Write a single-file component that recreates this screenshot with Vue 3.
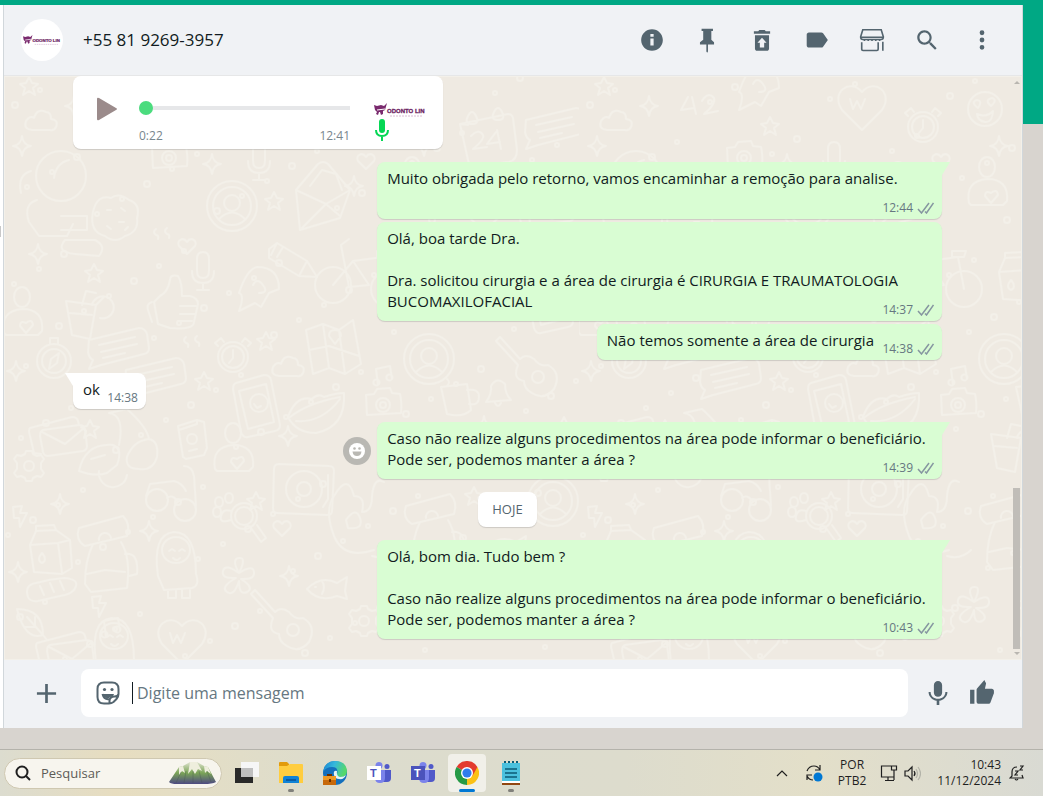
<script setup>
import { ref, reactive } from 'vue'

const draft = ref('')
const search = ref('')
const position = ref(0)

const contact = '+55 81 9269-3957'

const headerIcons = [
    { name: 'Dados do contato', d: 'M12 2C6.48 2 2 6.48 2 12s4.48 10 10 10 10-4.48 10-10S17.52 2 12 2zm1.5 15h-3v-6.5h3V17zm0-8h-3V6.500h3V9z' },
    { name: 'Fixar', d: 'M7 1.500h10.500v2.200h-1.500v8l2.500 2.300v2.200h-5.600v6.300l-.7 1.200-.8-1.200v-6.300H5.500V14L8.500 11.700v-8H7z' },
    { name: 'Restaurar', d: 'M19.500 4h-4l-1-1.300h-5L8.500 4h-4v2.200h15V4zM5.500 7.500v12.500c0 1.100.9 2 2 2h9c1.100 0 2-.9 2-2V7.500h-13zm8.500 7v4.500h-4v-4.500H7.800L12 10l4.200 4.500H14z' },
    { name: 'Etiqueta', d: 'M17.630 5.840C17.270 5.330 16.670 5 16 5L4.500 5.010C3.400 5.010 2.500 5.900 2.500 7v10c0 1.100.9 1.990 2 1.990L16 19c.67 0 1.270-.33 1.630-.84L22 12l-4.370-6.160z' },
    { name: 'Loja', line: true, d: 'M3.500 2.500h17l2 6.500c0 1.600-1 2.500-2.200 2.500H3.700C2.500 11.500 1.500 10.600 1.500 9zM2 9.500h20M2.500 14v6.500c0 .8.500 1.200 1.200 1.200H16.500c.8 0 1.200-.5 1.200-1.200V14M22 13.500v8.500M5 11v2M8.500 11v2M12 11v2M15.500 11v2M19 11v2' },
    { name: 'Pesquisar', d: 'M15.900 14.300H15l-.3-.3c1-1.100 1.600-2.700 1.600-4.300 0-3.700-3-6.700-6.700-6.700S3 6 3 9.700s3 6.700 6.700 6.700c1.600 0 3.200-.6 4.300-1.600l.3.3v.8l5.100 5.100 1.500-1.500-5-5.200zm-6.200 0c-2.600 0-4.600-2.100-4.600-4.600s2.100-4.600 4.600-4.600 4.600 2.100 4.600 4.600-2 4.600-4.600 4.600z' },
    { name: 'Menu', d: 'M12 7.500a2.200 2.200 0 1 0 0-4.400 2.200 2.200 0 0 0 0 4.400zm0 2.300a2.200 2.200 0 1 0 0 4.400 2.200 2.200 0 0 0 0-4.400zm0 6.700a2.200 2.200 0 1 0 0 4.400 2.200 2.200 0 0 0 0-4.400z' }
]

const messages = reactive([
    { out: true, tail: true, gap: true, time: '12:44', text: 'Muito obrigada pelo retorno, vamos encaminhar a remoção para analise.' },
    { out: true, time: '14:37', text: 'Olá, boa tarde Dra.\n\nDra. solicitou cirurgia e a área de cirurgia é CIRURGIA E TRAUMATOLOGIA BUCOMAXILOFACIAL' },
    { out: true, time: '14:38', text: 'Não temos somente a área de cirurgia' },
    { tail: true, gap: true, time: '14:38', text: 'ok' },
    { out: true, tail: true, gap: true, react: true, time: '14:39', text: 'Caso não realize alguns procedimentos na área pode informar o beneficiário. Pode ser, podemos manter a área ?' },
    { day: 'HOJE' },
    { out: true, tail: true, gap: true, time: '10:43', text: 'Olá, bom dia. Tudo bem ?\n\nCaso não realize alguns procedimentos na área pode informar o beneficiário. Pode ser, podemos manter a área ?' }
])

// wallpaper drawings, each one centred on 0,0
const shapes = {
    star: 'M0-9L3-3 9-2 4 2 6 9 0 5-6 9-4 2-9-2-3-3Z',
    sparkle: 'M0-10Q1-1 9 0 1 1 0 10-1 1-9 0-1-1 0-10Z',
    heart: 'M0 8L-8 0C-11-5-4-10 0-4 4-10 11-5 8 0Z',
    bigHeart: 'M0 26L-20 6C-32-12-12-26 0-12 12-26 32-12 20 6ZM-12-5l3 10 4-8 4 8 4-10',
    dot: 'M-3 0a3 3 0 1 0 6 0a3 3 0 1 0-6 0',
    mini: 'M-2 0a2 2 0 1 0 4 0a2 2 0 1 0-4 0',
    avatar: 'M-25 0a25 25 0 1 0 50 0a25 25 0 1 0-50 0M-19 0a19 19 0 1 0 38 0a19 19 0 1 0-38 0M-8-3a8 8 0 1 0 16 0a8 8 0 1 0-16 0M-13 13Q0 0 13 13',
    astro: 'M-25-20a25 25 0 1 0 50 0a25 25 0 1 0-50 0M-7-18q2-15 15-18M-30-25q-14 4-10 22M-24 4q-14 4-8 22l10 14h28l6-12M0 20h26v14H0M4 44q-10 12 10 14l24 2q8-10-4-16z',
    cookie: 'M-22-6q4-18 18-14 8-6 18 2 12 4 8 18 2 14-12 18-10 8-20 0-16-4-12-24zM-8-8h4M6-10l4 3M-8 8l4 3M4 4h5M10 12l3-3',
    compass: 'M-17 0a17 17 0 1 0 34 0a17 17 0 1 0-34 0M-12 0a12 12 0 1 0 24 0a12 12 0 1 0-24 0M5-8L-3-2-5 8 3 2ZM-4-17v-6h8v6',
    chat: 'M-28-6L22-18q6 0 8 6l2 14q0 5-5 6L-16 19l-12 4 4-9q-4-2-5-8zM-18-1L18-9M-16 6L20-2M-14 12L8 7',
    letter: 'M-27-8L15-19q5 0 6 4l1 4M-27-8q-2 2 0 8l4 17 7 1M-14-6l36-5q5 0 6 4l2 17q0 4-4 5L-9 20q-4 0-5-4l-3-16q0-5 3-6zM-15-4L8 8 27-8',
    openLetter: 'M-26-6L-4-32q5-4 10 0L28-6 18 22-22 34ZM-26-6L4 8 28-6M4 8L-20 32M4 8L18 20M-12-10L0-26 14-22 20-6',
    thumb: 'M-18-2l4 22 12 4q24 2 24-6l4-18q0-6-8-8l-8 0q0-14-4-20-8-2-8 4-2 12-10 16zM-20-2q-6 2-4 8l4 12M8 2h16M8 10h16M6 17h14',
    mic: 'M-6-12q0-7 6-7t6 7v12q0 7-6 7t-6-7zM-11 0q0 12 11 12T11 0M0 12v7M-6 19H6',
    pencil: 'M-22-14l8-6 30 18 10 16-18-1-30-18zM-14-20l-6 12M-8-16l-6 10M16-2L8 13',
    drink: 'M-18-12L12-8 6 26-12 22ZM-14 0L8 2M-2-8l4-14 10 2M8-8a11 11 0 1 1 8 13M12-8l8-8',
    clock: 'M-15 0a15 15 0 1 0 30 0a15 15 0 1 0-30 0M-11 0a11 11 0 1 0 22 0a11 11 0 1 0-22 0M0-7v8l-4 5M-15-11l-3-3 6-5 3 4M15-11l3-3-6-5-3 4',
    cloud: 'M-10 9q-9-1-6-9 4-6 8-3 3-10 12-6 5 0 5 7 8 1 5 8-2 4-6 3z',
    phone: 'M-20-22L8-30q6 0 7 5L24 20q0 5-5 6L-8 32q-5 1-7-5l-8-43q0-5 3-6zM-17-14L10-21l8 38-26 7ZM-6-2a9 9 0 1 0 18 0a9 9 0 1 0-18 0M-2-1l3 4 4-2',
    lips: 'M-28 4Q-20-18-4-14 2-20 8-16 20-20 28-20 30 14 0 20-20 20-28 4ZM-26 4Q-8-10 24-16M-20 8Q6 10 24-14',
    map: 'M-27-16L-10-22 6-16 20-26 28 18 12 28-4 22-20 28ZM-10-22l6 44M6-16l6 44M-24 4l20-4 30 10M2-2l6-8q0-6-6-6t-6 6z',
    scooter: 'M-38 20q6-28 34-26 10 4 4 20l-10 8q-12 4-28-2zM-18 20a14 14 0 0 0 28 4M2-6q6-30-10-32M-8-38l18-4q20 18 22 30 10 2 8 18-4 14-18 12-14 0-12-12 6-16 22-18M-26 8l14-4',
    gear: 'M-4-12L-3-15H3L4-12 8-10 12-11 15-7 12-3V3L15 7 12 11 8 10 4 12 3 15H-3L-4 12-8 10-12 11-15 7-12 3V-3L-15-7-12-11-8-10ZM-5 0a5 5 0 1 0 10 0a5 5 0 1 0-10 0',
    card: 'M-13-13L6-19l7 2 3 26-3 7-18 4-3-2zM6-19v4L-12-9M-4 0a5 5 0 1 0 10 0a5 5 0 1 0-10 0M-2 12l8-2',
    person: 'M-8-14a8 10 0 1 0 16 0a8 10 0 1 0-16 0M-18 22q-4-22 18-24 22 0 20 22l-4 4h-32zM4 22l-6-7q0-6 6-3 6-5 7 2z',
    deck: 'M-30-20q0-5 5-5l50 2q5 0 5 5l-2 40q0 4-5 4l-50-2q-4 0-4-5zM-18 0a18 18 0 1 0 36 0a18 18 0 1 0-36 0M-7 0a7 7 0 1 0 14 0a7 7 0 1 0-14 0M24-14v24l-5 8',
    glasses: 'M-26 4a11 11 0 1 0 22 0a11 11 0 1 0-22 0M2 14a11 11 0 1 0 22 0a11 11 0 1 0-22 0M-5 2q6-4 10 3M-26 0l4-12 24-3q8 2 12 10M24 10L22-20q-2-10-10-10',
    lens: 'M-6 0a13 13 0 1 0 26 0a13 13 0 1 0-26 0M-2 0a9 9 0 1 0 18 0a9 9 0 1 0-18 0M14 12l10 14 5-4-9-13M-22-14a4 5 0 1 0 8 0a4 5 0 1 0-8 0M-12-18a4 5 0 1 0 8 0a4 5 0 1 0-8 0M-24-4a4 5 0 1 0 8 0a4 5 0 1 0-8 0M-6 4q-12 4-10-4t10-5',
    milk: 'M-20-4l6-14 20-1 14 10 2 28-10 6-28-2ZM-20-4L8-6 20-9M8-6l4 30M-14-18v-5l18-1 2 5M-8 14q-6-3 0-10 6 7 0 10z',
    pack: 'M-28-30L16-42q8 8 4 20L-22-12q-10-6-6-18zM-14-14q-8 16-8 40l6 8 36-4q4-30-6-46M-20 16l18-4 20 2M-8-18a6 6 0 0 1 12-2M18-4q14-2 12 20l-8 2',
    penguin: 'M-18 16q-6-42 16-44 22 0 22 42 4 12-4 14l-28 2zM-14-10a14 13 0 1 0 28 0a14 13 0 1 0-28 0M-7-9l3-2 3 2M3-9l3-2 3 2M-3-2q4 4 7 0M-8 30v8h8v-8M6 30v8h8v-8',
    flower: 'M0-4q-8-14 0-15t0 15q14-9 15-1T2 2q14 9 6 13T0 4q-5 16-12 11T-3 1q-15 1-13-7T0-4z',
    fish: 'M-18 2Q-4-12 12-4l10-6-2 14 2 8-10-3Q-6 16-18 2ZM-10 0h1M-3-6q4 6 0 13',
    guitar: 'M-28-34l20 22q6-6 14 0 6 8 14 6 14 8 6 24-10 12-22 4-8-4-8-12-12-2-6-16l-22-24zM4 6a6 6 0 1 0 12 0a6 6 0 1 0-12 0',
    leaf: 'M-12-14q26 0 26 26-18 6-26-26zM14 12L-2-6M6 4V-6M6 4H-4M14 12l4 5',
    bread: 'M-26 8q-4-12 8-14 14-4 28-5 14 1 12 8-2 8-16 10l-22 5q-8 1-10-4zM-14-3l4 9M-4-6l4 9M6-8l4 9',
    calendar: 'M-28-14L20-24q4 0 5 4l4 32q0 10-8 12l-34 4q-6 0-7-6zM-28-14l8 1M-20-22q4-8 8 0t-4 8-4-8M6-26q4-8 8 0t-4 8-4-8M-17-2q8-8 12-1 2 4-10 14l14-2M8-6L-1 6l13-2M9-8l4 19',
    bike: 'M-34 14a18 18 0 1 0 36 0a18 18 0 1 0-36 0M22 18a18 18 0 1 0 36 0a18 18 0 1 0-36 0M-16 14L4-10l16 24-20 2L-8-26l8-6M4-10l30-4 6 32M28-20h14l-2 6H28z',
    mug: 'M-14-12l26-3 4 26q-8 8-24 4zM12-9q12-2 12 7t-10 7M-8-20q4 3 0 7',
    bell: 'M-12 8q6-8 5-16 6-10 14-2 0 10 6 16zM-3 9q3 6 6 0',
    camera: 'M-17-8l8-1 3-5 13-1 2 5 8 1q2 8 1 19l-34 2zM-7 2a7 7 0 1 0 14 0a7 7 0 1 0-14 0M-3 2a3 3 0 1 0 6 0a3 3 0 1 0-6 0',
    dino: 'M-30 20q-10-26 0-40 14-24 20 0 12 0 8 16 10 0 10-16 2-20 12-14M-30 20q10 24 40 14M-18 4q10-14 14-2t-12 10zM8 40q14 4 24-6',
    smile: 'M-17 0a17 17 0 1 0 34 0a17 17 0 1 0-34 0M-7-1q-8-6-1-8 6 1 1 8zM6-3q-7-6 1-8 6 2-1 8zM-8 5q10 4 16-3-1 12-8 11t-8-8z',
    number: 'M-12-8l-7 13 13-2M-8-8l4 17M2-4q6-10 12-3 2 6-10 16l14-3',
    bird: 'M-20 20q6-16 0-18 8-24 18-26 22 0 22 22l-10 4-8 14-6-4zM-6-6q4-8 10 0t-4 8',
    quote: 'M-8-5q-4 3 0 6 3 0 2 4M3-6q-4 3 0 6 3 0 2 4',
    note: 'M-5 8a3 3 0 1 0-1 1l-2-16L6-10l2 13a3 3 0 1 0-1 1',
    bolt: 'M-7-9L2-10 0-3H7L0 11-1 2H-6Z'
}

const doodles = [
    ['astro', 57, 120], ['cookie', 111, 142], ['compass', 50, 285], ['chat', 113, 270], ['chat', 150, 300], ['avatar', 228, 130],
    ['openLetter', 318, 120], ['thumb', 168, 228], ['mic', 199, 195], ['pencil', 287, 187], ['drink', 80, 237], ['clock', 229, 281],
    ['cloud', 285, 291], ['phone', 252, 329], ['lips', 312, 337], ['map', 329, 270], ['letter', 53, 360], ['scooter', 113, 375],
    ['gear', 25, 390], ['card', 187, 363], ['person', 229, 371], ['deck', 300, 413], ['glasses', 168, 420], ['lens', 233, 440],
    ['milk', 46, 473], ['pack', 103, 482], ['penguin', 172, 484], ['flower', 235, 501], ['fish', 321, 511], ['guitar', 279, 548],
    ['leaf', 25, 547], ['bread', 50, 513], ['bigHeart', 178, 562], ['calendar', 484, 62], ['chat', 550, 50], ['bike', 345, 195],
    ['avatar', 425, 283], ['guitar', 524, 295], ['mug', 451, 323], ['bell', 494, 318], ['camera', 379, 327], ['dino', 360, 440],
    ['avatar', 549, 425], ['bigHeart', 283, 28], ['smile', 406, 33], ['clock', 344, 51], ['number', 121, 29], ['star', 191, 50],
    ['bird', 180, 14], ['cloud', 38, 45], ['person', 408, 105], ['camera', 165, 80], ['bigHeart', 480, 130], ['letter', 540, 130],
    ['milk', 440, 200], ['smile', 500, 220], ['phone', 545, 225], ['drink', 430, 370], ['cookie', 500, 380], ['pack', 430, 460],
    ['fish', 500, 470], ['flower', 395, 530], ['mug', 450, 545], ['gear', 360, 545], ['lips', 520, 540], ['note', 380, 300],
    ['person', 18, 235], ['mic', 255, 85], ['bird', 255, 215], ['letter', 60, 575], ['penguin', 110, 570], ['quote', 160, 158],
    ['quote', 190, 266], ['note', 108, 552], ['bolt', 95, 530], ['bolt', 16, 440], ['star', 86, 353], ['star', 200, 305],
    ['star', 262, 265], ['star', 252, 425], ['star', 25, 10], ['star', 270, 125], ['star', 90, 197], ['sparkle', 18, 70],
    ['sparkle', 34, 178], ['sparkle', 145, 455], ['sparkle', 56, 428], ['sparkle', 12, 295], ['sparkle', 208, 88], ['sparkle', 284, 360],
    ['sparkle', 350, 110], ['sparkle', 14, 496], ['sparkle', 285, 500], ['sparkle', 420, 70], ['sparkle', 70, 30], ['heart', 183, 170],
    ['heart', 278, 452], ['heart', 362, 85], ['sparkle', 480, 350], ['star', 560, 350], ['star', 470, 420], ['sparkle', 560, 500]
]

// loose circles between the drawings
for (let i = 0; i < 150; i++) {
    doodles.push([i % 3 ? 'mini' : 'dot', (i * 139 + 11) % 575, (i * 233 + 29) % 584])
}

const apps = ['Visão de tarefas', 'Explorador de Arquivos', 'Edge', 'Teams', 'Teams pessoal', 'Chrome', 'Bloco de notas']
</script>

<template>
    <div class="desktop">
        <main class="stage">
            <div class="sidebar_edge"><span></span></div>
            <section class="window">
                <header class="chat_header">
                    <div class="avatar">
                        <svg class="logo" viewBox="0 0 52 16">
                            <g id="brand">
                                <path fill="#7a2a6e" d="M0 3l3 1 4-1 3 1 3-3-2 7-2 1v3l-2 1-1-3H5l-1 3-2-1 1-2-2-2z" />
                                <path stroke="#fff" fill="none" d="M3 8l8-1" />
                                <text x="13" y="11" font-family="Liberation Sans, sans-serif" font-size="6" font-weight="700" fill="#6d2462" stroke="#6d2462" stroke-width=".3">ODONTO LIN</text>
                                <path stroke="#d9bcd4" stroke-width="1" stroke-dasharray="2 1" d="M16 14h32" />
                            </g>
                        </svg>
                    </div>
                    <h1>{{ contact }}</h1>
                    <nav class="header_actions">
                        <button v-for="icon in headerIcons" :key="icon.name" :aria-label="icon.name">
                            <svg viewBox="0 0 24 24" :class="{ line: icon.line }"><path :d="icon.d" /></svg>
                        </button>
                    </nav>
                </header>

                <div class="conversation">
                    <svg class="wallpaper" aria-hidden="true">
                        <defs>
                            <pattern id="doodles" width="575" height="584" patternUnits="userSpaceOnUse">
                                <path v-for="(item, index) in doodles" :key="index" :d="shapes[item[0]]" :transform="`translate(${item[1]} ${item[2]})`" />
                            </pattern>
                        </defs>
                        <rect width="100%" height="100%" fill="url(#doodles)" />
                    </svg>

                    <div class="messages">
                        <div class="audio">
                            <button class="play" aria-label="Reproduzir">
                                <svg viewBox="0 0 22 24"><path d="M1 2v20q0 2 2 1L20 13q2-1 0-2L3 1Q1 0 1 2z" /></svg>
                            </button>
                            <div class="track">
                                <input v-model="position" type="range" min="0" max="22" aria-label="Posição do áudio">
                                <div class="times"><span>0:22</span><span>12:41</span></div>
                            </div>
                            <div class="voice">
                                <svg class="logo" viewBox="0 0 52 16"><use href="#brand" /></svg>
                                <svg class="voice_mic" viewBox="0 0 14 22">
                                    <rect x="4" y="0" width="6" height="14" rx="3" fill="#06d755" />
                                    <path d="M1 11q0 6 6 6t6-6M7 17v5" fill="none" stroke="#06d755" stroke-width="2" />
                                </svg>
                            </div>
                        </div>

                        <template v-for="(message, index) in messages" :key="index">
                            <div v-if="message.day" class="day">{{ message.day }}</div>
                            <div v-else class="row" :class="{ out: message.out, gap: message.gap }">
                                <button v-if="message.react" class="react" aria-label="Reagir">
                                    <svg viewBox="0 0 16 16">
                                        <circle cx="8" cy="8" r="8" fill="#fff" />
                                        <g fill="#b9b8b3"><circle cx="5.500" cy="5.500" r="1.300" /><circle cx="10.500" cy="5.500" r="1.300" /><path d="M3.500 8.500h9Q12 13 8 13T3.500 8.500z" /></g>
                                    </svg>
                                </button>
                                <div class="bubble" :class="{ tail: message.tail }">
                                    <p>{{ message.text }}<span class="spacer"></span></p>
                                    <div class="meta">
                                        <span>{{ message.time }}</span>
                                        <svg v-if="message.out" viewBox="0 0 17 12"><path d="M1 7l3.500 4L12 1M8 9.500l1.500 1.500L16.500 1" /></svg>
                                    </div>
                                </div>
                            </div>
                        </template>
                    </div>

                    <div class="scrollbar">
                        <i class="up"></i>
                        <div class="thumb"></div>
                        <i class="down"></i>
                    </div>
                </div>

                <footer class="composer">
                    <button class="attach" aria-label="Anexar">
                        <svg viewBox="0 0 24 24"><path d="M10.600 2h2.800v8.600H22v2.800h-8.600V22h-2.800v-8.600H2v-2.800h8.600z" /></svg>
                    </button>
                    <div class="field">
                        <button class="sticker" aria-label="Figurinhas">
                            <svg viewBox="0 0 24 24">
                                <path class="outline" d="M8 1.500h8Q22.500 1.500 22.500 8v5q0 3-2 5l-3 3q-2 1.500-4.500 1.500H8Q1.500 22.500 1.500 16V8Q1.500 1.500 8 1.500zM13.500 22v-2q0-4.500 5-4.500 3.500 0 4-2.500M6.500 13q1.500 6 7 5" />
                                <circle cx="8.500" cy="8.500" r="1.600" /><circle cx="16" cy="8.500" r="1.600" /><path d="M6 13h12q-.5 2-2 2.500-2 .3-3 1.500h-2q-3 0-5-4z" />
                            </svg>
                        </button>
                        <span class="caret"></span>
                        <input v-model="draft" type="text" placeholder="Digite uma mensagem" aria-label="Digite uma mensagem">
                    </div>
                    <button class="record" aria-label="Gravar">
                        <svg viewBox="0 0 24 24"><path d="M12 15.500c2.100 0 3.800-1.700 3.800-3.800V4.800C15.800 2.700 14.100 1 12 1S8.200 2.700 8.200 4.800v6.900c0 2.100 1.700 3.800 3.800 3.800zm6.800-4.500c0 3.700-3 6.300-6.800 6.300S5.200 14.700 5.200 11H3.300c0 4.200 3.400 7.500 7.500 8.100V23h2.400v-3.900c4.100-.6 7.500-3.900 7.500-8.100z" /></svg>
                    </button>
                    <button class="like" aria-label="Curtir">
                        <svg viewBox="0 0 24 24"><path d="M1 22h4V9H1v13zm22-12c0-1.100-.9-2-2-2h-6.300l1-4.600v-.3c0-.4-.2-.8-.5-1.100L14.200 0 7.600 7.600C7.200 8 7 8.500 7 9v11c0 1.100.9 2 2 2h9c.8 0 1.500-.5 1.800-1.200l3-8c.2-.3.2-.5.2-.8v-2z" /></svg>
                    </button>
                </footer>
            </section>
        </main>

        <footer class="taskbar">
            <label class="search">
                <svg class="search_icon" viewBox="0 0 16 16"><circle cx="7" cy="7" r="5.500" /><path d="M11 11l4 4" /></svg>
                <input v-model="search" type="text" placeholder="Pesquisar" aria-label="Pesquisar">
                <svg class="mountains" viewBox="0 0 48 22">
                    <defs>
                        <linearGradient id="hill" x1="0" y1="0" x2="0" y2="1">
                            <stop offset="0" stop-color="#dfe3cf" /><stop offset=".5" stop-color="#7aa456" /><stop offset="1" stop-color="#4e4a82" />
                        </linearGradient>
                    </defs>
                    <path fill="url(#hill)" d="M0 20L10 5l4-1 7-4 7 0 7 4 4 1 8 15q-4 2-12 2H8q-6 0-8-2z" />
                    <path fill="#eeeedd" d="M10 5l4-1 2 7-3-2-3 4zM21 0h7l5 9-4-2-3 5-3-5-4 5zM35 4l4 1 3 7-4-3-2 2z" />
                    <path fill="none" stroke="#45534f" opacity=".35" d="M12 10L7 21M17 9l-2 12M24 9v12M30 9l3 12M38 9l4 11" />
                </svg>
            </label>

            <nav class="apps">
                <button v-for="(app, index) in apps" :key="app" :aria-label="app" :class="{ active: app === 'Chrome', running: index === 1 || index === 6 }">
                    <svg v-if="index === 0" viewBox="0 0 24 24">
                        <path fill="#292929" d="M0 7h18v15H0z" /><path fill="#f6f6f6" d="M6 1h18v15H6z" /><path fill="#bfbfbf" d="M6 7h12v9H6z" />
                    </svg>
                    <svg v-else-if="index === 1" viewBox="0 0 24 24">
                        <path fill="#e29b0c" d="M0 2q0-1 1-1h7l2 2v3H0z" /><path fill="#ffcd3f" d="M0 5h8l3-2h12q1 0 1 1v18H0z" /><path fill="#1183d6" d="M4 22v-5q0-2 2-2h12q2 0 2 2v5z" /><path fill="#0a5ca4" d="M7 18h10v2H7z" />
                    </svg>
                    <svg v-else-if="index === 2" viewBox="0 0 24 24">
                        <defs><linearGradient id="edge" x1="0" y1="0" x2="1" y2=".3"><stop offset="0" stop-color="#1680d0" /><stop offset=".5" stop-color="#35b8dc" /><stop offset="1" stop-color="#55d86b" /></linearGradient></defs>
                        <circle cx="12" cy="12" r="12" fill="#1470bd" />
                        <path fill="url(#edge)" d="M0 11Q2 0 12 0q11 0 12 10 0 6-7 6-4 0-3-3 2-7-5-7-6 0-9 5z" />
                        <path fill="#e4f3f5" d="M11 14q-1-5 3-4-1 5 3 6 4 0 6-2-2 5-7 4-4 0-5-4z" />
                        <path fill="#c7690b" d="M0 16h13v8H0z" /><path fill="#ee9a25" d="M0 15h13v4H0z" /><path fill="#693000" d="M4 13h5v2H4zM6 18h2v3H6z" />
                    </svg>
                    <svg v-else-if="index === 3 || index === 4" viewBox="0 0 24 24">
                        <circle cx="12" cy="4.500" r="3.500" fill="#7b83eb" /><circle cx="20" cy="5.500" r="2.500" fill="#5059c9" />
                        <path fill="#5059c9" d="M16 9h8v8q0 4-4 4h-4z" /><path fill="#7b83eb" d="M8 9h10v8q0 5-5 5t-5-5z" />
                        <path :fill="index === 3 ? '#fff' : '#4b53bc'" d="M0 5h14v14H0z" />
                        <text x="3" y="16" font-size="11" font-weight="700" :fill="index === 3 ? '#4b53bc' : '#fff'">T</text>
                    </svg>
                    <svg v-else-if="index === 5" viewBox="0 0 24 24">
                        <path fill="#e33b2e" d="M12 12L1.600 6A12 12 0 0 1 22.400 6z" /><path fill="#fbc116" d="M12 12L22.400 6A12 12 0 0 1 12 24z" /><path fill="#269a45" d="M12 12L12 24A12 12 0 0 1 1.600 6z" />
                        <path fill="#e33b2e" d="M12 6h10.400l-5 9z" /><path fill="#fbc116" d="M17 15l-5 9 2-10z" /><path fill="#269a45" d="M1.600 6l5 9 6 3z" />
                        <circle cx="12" cy="12" r="6" fill="#fff" /><circle cx="12" cy="12" r="4.600" fill="#2f7ded" />
                    </svg>
                    <svg v-else viewBox="0 0 24 24">
                        <path fill="#4bc1de" d="M3 2h18v18H3z" /><path fill="#914711" d="M3 22h18v2H3z" /><path fill="#fff" d="M3 20h18v2H3z" />
                        <path stroke="#0c5b77" stroke-width="2" stroke-dasharray="2 2" d="M5 1h15" /><path stroke="#0c5b77" stroke-width="1.500" d="M6 8h12M6 12h12M6 16h12" />
                    </svg>
                </button>
            </nav>

            <div class="tray">
                <svg class="chevron" viewBox="0 0 12 12"><path d="M1 9l5-5 5 5" /></svg>
                <svg class="sync" viewBox="0 0 18 18">
                    <path d="M2 7q2-5 7-5 4 0 6 4M15 1v5h-5M2 16v-5h5M2 12q2 4 6 4" /><circle cx="13" cy="13" r="4.500" />
                </svg>
                <div class="language"><span>POR</span><span>PTB2</span></div>
                <svg class="network" viewBox="0 0 18 18"><path d="M12 2H1.500v11H14v-4M5 16.500h9M8 13v3M11.500 2h5v4h-5zM14 6v10" /></svg>
                <svg class="sound" viewBox="0 0 18 18"><path d="M2 7v5h3l4 4V3L5 7zM11 7q2 2.500 0 5" /><path class="faint" d="M13 5q3 4.500 0 9M15 3q5 6.500 0 13" /></svg>
                <div class="date"><span>10:43</span><span>11/12/2024</span></div>
                <svg class="alarm" viewBox="0 0 16 18"><path d="M8 3Q3 3 3 8v4l-2 2h13l-1-3M6 15q1.500 2 3 0M6 7h3l-3 4h3M11 2h3l-3 4h3" /></svg>
            </div>
        </footer>
    </div>
</template>

<style>
body {
    margin: 0;
}
</style>

<style scoped>
.desktop {
    display: flex;
    flex-direction: column;
    min-height: 100vh;
    font-family: "Open Sans", "Noto Sans", sans-serif;
    color: #111b21;
}

.desktop * {
    box-sizing: border-box;
}

button {
    display: flex;
    align-items: center;
    justify-content: center;
    padding: 0;
    border: 0;
    background: none;
    color: #54656f;
    cursor: pointer;
}

svg {
    display: block;
    flex: none;
    fill: currentColor;
}

.stage {
    flex: 1;
    display: flex;
    padding: 5px 20px 21px 0;
    background: linear-gradient(#00a884 124px, #d8d4cf 124px);
}

.sidebar_edge {
    width: 3px;
    padding-top: 221px;
    background: #fff;
}

.sidebar_edge span {
    display: block;
    width: 1px;
    height: 11px;
    background: #c8c8c8;
}

.window {
    flex: 1;
    display: flex;
    flex-direction: column;
    border-left: 1px solid #d1d7db;
    border-right: 1px solid #d1d7db;
    background: #f0f2f5;
}

.chat_header {
    display: flex;
    align-items: center;
    height: 71px;
    padding: 0 13px 0 17px;
    border-bottom: 1px solid #e6e7e8;
    background: #f0f2f5;
}

.avatar {
    display: flex;
    align-items: center;
    justify-content: center;
    width: 42px;
    height: 42px;
    border-radius: 50%;
    background: #fff;
}

.avatar .logo {
    width: 38px;
    height: 12px;
}

.chat_header h1 {
    flex: 1;
    margin: 0 0 0 20px;
    font-size: 17px;
    font-weight: 400;
    line-height: 24px;
}

.header_actions {
    display: flex;
}

.header_actions button {
    width: 55px;
    height: 40px;
}

.header_actions svg {
    width: 26px;
    height: 26px;
}

.header_actions .line {
    fill: none;
    stroke: currentColor;
    stroke-width: 1.5;
}

.conversation {
    flex: 1;
    display: grid;
    grid-template-columns: 1fr 9px;
    position: relative;
    background: #efeae2;
}

.wallpaper {
    position: absolute;
    inset: 0;
    width: 100%;
    height: 100%;
    fill: none;
    stroke: #f3f0e9;
    stroke-width: 2;
    stroke-linejoin: round;
    stroke-linecap: round;
}

.messages {
    position: relative;
    display: flex;
    flex-direction: column;
    gap: 3px;
    padding: 0 71px 20px 69px;
}

.audio {
    display: flex;
    align-self: flex-start;
    width: 370px;
    height: 73px;
    padding: 0 12px 0 23px;
    border-radius: 8px;
    background: #fff;
    box-shadow: 0 1px 1px rgba(11, 20, 26, 0.15);
}

.play {
    align-self: flex-start;
    width: 22px;
    height: 24px;
    margin-top: 21px;
    color: #9b8b8b;
}

.play svg {
    width: 22px;
    height: 24px;
}

.track {
    width: 211px;
    margin: 24px 0 0 21px;
}

.track input {
    appearance: none;
    display: block;
    width: 100%;
    height: 16px;
    margin: 0;
    background: linear-gradient(#e6e7e9, #e6e7e9) center / 100% 4px no-repeat;
}

.track input::-webkit-slider-thumb {
    appearance: none;
    width: 14px;
    height: 14px;
    border-radius: 50%;
    background: #4bdc7e;
}

.times {
    display: flex;
    justify-content: space-between;
    margin-top: 12px;
    font-size: 12px;
    line-height: 16px;
    color: #78868e;
}

.voice {
    margin: 25px 0 0 24px;
}

.voice .logo {
    width: 52px;
    height: 18px;
}

.voice_mic {
    width: 14px;
    height: 22px;
    margin-left: 1px;
}

.row {
    display: flex;
    align-items: center;
    gap: 6px;
}

.row.out {
    justify-content: flex-end;
}

.row.gap {
    margin-top: 10px;
}

.bubble {
    position: relative;
    display: grid;
    max-width: 65%;
    padding: 6px 8px 5px 10px;
    border-radius: 8px;
    background: #fff;
    box-shadow: 0 1px 1px rgba(11, 20, 26, 0.15);
}

.out .bubble {
    background: #d9fdd3;
}

.tail::before {
    content: "";
    position: absolute;
    top: 0;
    left: -8px;
    width: 16px;
    height: 13px;
    background: inherit;
    clip-path: polygon(0 0, 100% 0, 100% 100%, 8px 100%);
}

.out .tail::before {
    right: -8px;
    left: auto;
    clip-path: polygon(0 0, 100% 0, 8px 100%, 0 100%);
}

.bubble p {
    grid-area: 1 / 1;
    margin: 0 0 4px;
    font-size: 15px;
    line-height: 21px;
    white-space: pre-line;
}

.spacer {
    display: inline-block;
    width: 38px;
    height: 1px;
}

.out .spacer {
    width: 60px;
}

.meta {
    grid-area: 1 / 1;
    align-self: end;
    justify-self: end;
    display: flex;
    align-items: center;
    gap: 4px;
    height: 12px;
    font-size: 12px;
    line-height: 12px;
    color: #667781;
}

.meta svg {
    width: 17px;
    height: 12px;
    fill: none;
    stroke: #8696a0;
    stroke-width: 1.5;
}

.react {
    width: 28px;
    height: 28px;
    border-radius: 50%;
    background: #b9b8b3;
}

.react svg {
    width: 16px;
    height: 16px;
}

.day {
    align-self: center;
    margin: 10px 0 0;
    padding: 0 14px;
    border-radius: 8px;
    background: #fff;
    box-shadow: 0 1px 1px rgba(11, 20, 26, 0.15);
    font-size: 13px;
    line-height: 35px;
    color: #54656f;
}

.scrollbar {
    position: relative;
    display: flex;
    flex-direction: column;
    align-items: center;
    padding: 5px 2px 5px 0;
}

.scrollbar i {
    border: 3px solid transparent;
}

.scrollbar .up {
    margin-bottom: auto;
    border-top: 0;
    border-bottom-color: #b9b6b0;
}

.scrollbar .down {
    margin-top: 3px;
    border-bottom: 0;
    border-top-color: #b9b6b0;
}

.scrollbar .thumb {
    width: 7px;
    height: 28%;
    background: #c0bdb8;
}

.composer {
    display: flex;
    align-items: center;
    height: 68px;
    padding: 0 18px 2px 20px;
}

.attach {
    width: 44px;
    height: 44px;
}

.attach svg {
    width: 23px;
    height: 23px;
}

.field {
    flex: 1;
    display: flex;
    align-items: center;
    height: 48px;
    margin: 0 8px 0 13px;
    padding: 0 15px;
    border-radius: 8px;
    background: #fff;
}

.sticker svg {
    width: 24px;
    height: 24px;
}

.sticker .outline {
    fill: none;
    stroke: currentColor;
    stroke-width: 2;
}

.caret {
    width: 1px;
    height: 22px;
    margin: 0 4px 0 12px;
    background: #111b21;
}

.field input {
    flex: 1;
    min-width: 0;
    padding: 0;
    border: 0;
    outline: 0;
    background: none;
    font: 16px "Open Sans", "Noto Sans", sans-serif;
    color: #111b21;
}

.field input::placeholder {
    color: #667781;
    opacity: 1;
}

.record,
.like {
    width: 44px;
    height: 44px;
}

.record svg {
    width: 26px;
    height: 26px;
}

.like svg {
    width: 28px;
    height: 26px;
}

.taskbar {
    display: flex;
    align-items: center;
    height: 47px;
    padding: 0 18px 0 4px;
    border-top: 1px solid #b4b2ab;
    background: linear-gradient(90deg, #dcdccf, #e7ddc0 11%, #e5dec4 16%, #dcdccd 32%, #dddccd 60%, #e3dfc9 78%, #d9dad3);
    color: #1f1f1f;
}

.search {
    display: flex;
    align-items: center;
    width: 218px;
    height: 31px;
    padding: 0 4px 0 10px;
    border: 1px solid #cfc8b1;
    border-radius: 16px;
    background: #f7f5ee;
}

.search_icon {
    width: 16px;
    height: 16px;
    fill: none;
    stroke: #1f1f1f;
    stroke-width: 2;
}

.search input {
    flex: 1;
    min-width: 0;
    padding: 0 0 0 10px;
    border: 0;
    outline: 0;
    background: none;
    font: 13px "Open Sans", "Noto Sans", sans-serif;
}

.search input::placeholder {
    color: #5c5b57;
    opacity: 1;
}

.mountains {
    width: 48px;
    height: 22px;
}

.apps {
    display: flex;
    gap: 6px;
    margin-left: 6px;
}

.apps button {
    position: relative;
    width: 38px;
    height: 38px;
    border-radius: 4px;
}

.apps svg {
    width: 24px;
    height: 24px;
}

.apps .active {
    background: #f1f0e9;
}

.apps .active::after,
.apps .running::after {
    content: "";
    position: absolute;
    bottom: 0;
    left: 16px;
    width: 6px;
    height: 3px;
    border-radius: 2px;
    background: #80807a;
}

.apps .active::after {
    left: 11px;
    width: 16px;
    background: #0078d4;
}

.tray {
    display: flex;
    align-items: center;
    margin-left: auto;
    font-size: 12px;
    line-height: 16px;
}

.tray svg {
    fill: none;
    stroke: #1f1f1f;
    stroke-width: 1.2;
}

.tray .chevron {
    width: 12px;
    height: 12px;
}

.tray .sync {
    width: 18px;
    height: 18px;
    margin-left: 17px;
}

.sync circle {
    fill: #0078d4;
    stroke: none;
}

.language,
.date {
    display: flex;
    flex-direction: column;
}

.language {
    align-items: center;
    margin-left: 15px;
}

.tray .network {
    width: 18px;
    height: 18px;
    margin-left: 14px;
}

.tray .sound {
    width: 18px;
    height: 18px;
    margin-left: 5px;
}

.tray .sound .faint {
    stroke: #b3b3a9;
}

.date {
    align-items: flex-end;
    margin-left: 16px;
}

.tray .alarm {
    width: 16px;
    height: 18px;
    margin-left: 8px;
}
</style>
